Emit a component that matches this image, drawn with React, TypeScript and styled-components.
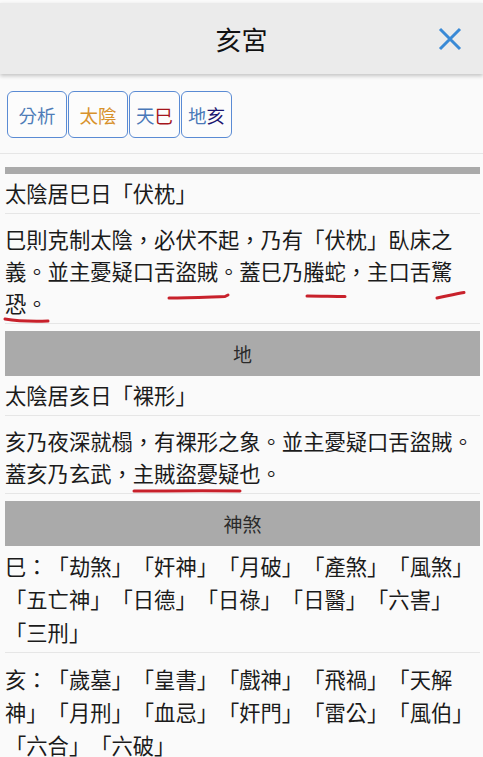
import React from 'react';
import styled, { createGlobalStyle } from 'styled-components';

const GlobalStyle = createGlobalStyle`
  html, body {
    margin: 0;
    padding: 0;
    background: #fafafa;
  }
  body {
    font-family: "Noto Sans CJK TC", "Noto Sans CJK SC", "Noto Sans", sans-serif;
    color: #1b1b1b;
    text-spacing-trim: space-all;
    font-kerning: none;
  }
`;

// Styled Components
const Root = styled.div`
  width: 483px;
  min-height: 757px;
  overflow: hidden;
`;

const Header = styled.div`
  margin-top: 3px;
  height: 71px;
  background: #ebebeb;
  box-shadow: 0 2px 4px rgba(0, 0, 0, 0.22);
  display: flex;
  align-items: center;
  justify-content: center;
  position: relative;
`;

const Title = styled.div`
  font-size: 26px;
  line-height: 1;
  color: #111;
`;

const CloseButton = styled.button`
  position: absolute;
  right: 19px;
  top: 22px;
  width: 28px;
  height: 28px;
  padding: 0;
  border: none;
  background: none;
  display: flex;
  align-items: center;
  justify-content: center;
`;

const Tabs = styled.div`
  display: flex;
  gap: 1px;
  padding: 17px 0 15px 7px;
  height: 47px;
  border-bottom: 1px solid #e6e6e6;
`;

const Tab = styled.button<{ $pad: number }>`
  height: 47px;
  padding: 0 ${p => p.$pad}px;
  border: 1.5px solid #5a8bd4;
  border-radius: 6px;
  background: #fcfcfc;
  font-family: inherit;
  font-size: 18.5px;
  display: flex;
  align-items: center;
`;

const Ch = styled.span<{ $color: string }>`
  color: ${p => p.$color};
`;

const Content = styled.div`
  margin: 0 3px 0 5px;
`;

const ThinBar = styled.div`
  margin-top: 13px;
  height: 7px;
  background: #aaaaaa;
`;

const SectionHeader = styled.div`
  margin-top: 7px;
  height: 45px;
  background: #aaaaaa;
  display: flex;
  align-items: center;
  justify-content: center;
  font-size: 19px;
  color: #2a2a2a;
`;

const Row = styled.div<{ $first?: boolean; $lh?: number }>`
  padding: ${p => (p.$first ? '3px' : '9px')} 0 4px;
  border-bottom: 1px solid #e6e6e6;
  font-size: 21.3px;
  line-height: ${p => p.$lh ?? 32}px;
`;

const Mark = styled.span`
  position: relative;
`;

const Ink = styled.svg<{ $left: number; $top: number }>`
  position: absolute;
  left: ${p => p.$left}px;
  top: calc(100% + ${p => p.$top}px);
  overflow: visible;
  pointer-events: none;
`;

function Scribble({ w, left, top, d }: { w: number; left: number; top: number; d: string }) {
  return (
    <Ink $left={left} $top={top} width={w} height={10} viewBox={`0 0 ${w} 10`}>
      <path d={d} fill="none" stroke="#c8212b" strokeWidth="3" strokeLinecap="round" strokeLinejoin="round" />
    </Ink>
  );
}

function CloseIcon() {
  return (
    <svg width="24" height="24" viewBox="0 0 24 24">
      <path d="M2 2 L22 22 M22 2 L2 22" stroke="#3a8ad6" strokeWidth="3" strokeLinecap="butt" />
    </svg>
  );
}

function App() {
  return (
    <Root>
      <GlobalStyle />
      <Header>
        <Title>亥宮</Title>
        <CloseButton aria-label="close">
          <CloseIcon />
        </CloseButton>
      </Header>

      <Tabs>
        <Tab $pad={10.5}>
          <Ch $color="#4f7db8">分析</Ch>
        </Tab>
        <Tab $pad={10.5}>
          <Ch $color="#d8922c">太陰</Ch>
        </Tab>
        <Tab $pad={6}>
          <Ch $color="#4a78b8">天</Ch>
          <Ch $color="#a5151b">巳</Ch>
        </Tab>
        <Tab $pad={6}>
          <Ch $color="#4a78b8">地</Ch>
          <Ch $color="#1c1670">亥</Ch>
        </Tab>
      </Tabs>

      <Content>
        <ThinBar />
        <Row $first>太陰居巳日「伏枕」</Row>
        <Row>
          巳則克制太陰，必伏不起，乃有「伏枕」臥床之義。並主憂疑口舌
          <Mark>
            盜賊
            <Scribble w={60} left={-6} top={8} d="M0 4 C 20 4, 40 3, 56 2.5 L 59 1" />
          </Mark>
          。蓋巳乃
          <Mark>
            螣蛇
            <Scribble w={40} left={4} top={7} d="M0 3 C 14 3, 26 3.5, 38 3.5" />
          </Mark>
          ，主口舌
          <Mark>
            驚
            <Scribble w={28} left={6} top={5} d="M0 7 C 10 5, 18 3, 27 1.5" />
          </Mark>
          <Mark>
            恐。
            <Scribble w={44} left={0} top={-1} d="M0 2 C 12 4, 28 4.5, 43 4" />
          </Mark>
        </Row>

        <SectionHeader>地</SectionHeader>
        <Row $first>太陰居亥日「裸形」</Row>
        <Row>
          亥乃夜深就榻，有裸形之象。並主憂疑口舌盜賊。蓋亥乃玄武，
          <Mark>
            主賊盜憂疑
            <Scribble w={107} left={1} top={0} d="M0 3 C 30 3, 70 2.5, 106 3" />
          </Mark>
          也。
        </Row>

        <SectionHeader>神煞</SectionHeader>
        <Row $first $lh={33}>巳：「劫煞」「奸神」「月破」「產煞」「風煞」「五亡神」「日德」「日祿」「日醫」「六害」「三刑」</Row>
        <Row $lh={33}>亥：「歲墓」「皇書」「戲神」「飛禍」「天解神」「月刑」「血忌」「奸門」「雷公」「風伯」「六合」「六破」</Row>
      </Content>
    </Root>
  );
}

export default App;
